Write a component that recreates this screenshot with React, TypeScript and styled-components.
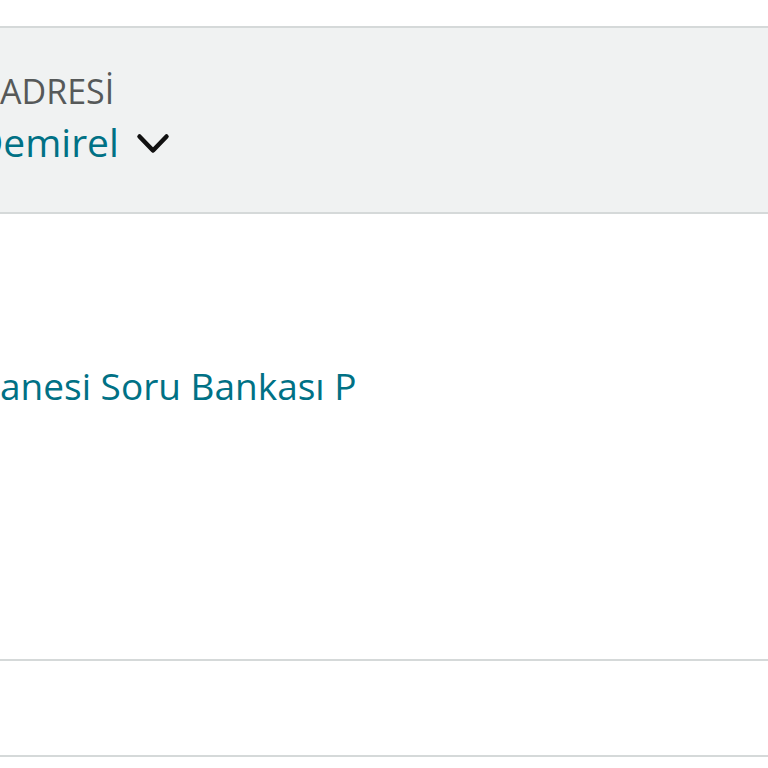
import React from "react";
import styled, { createGlobalStyle } from "styled-components";

const GlobalStyle = createGlobalStyle`
  html, body {
    margin: 0;
    padding: 0;
    background: #ffffff;
    overflow: hidden;
  }
  body {
    font-family: "Open Sans", "Noto Sans", Arial, sans-serif;
  }
`;

const Page = styled.div`
  width: 768px;
  height: 768px;
  overflow: hidden;
  display: flex;
  flex-direction: column;
  padding-top: 26px;
  box-sizing: border-box;
`;

const Header = styled.section`
  height: 188px;
  flex-shrink: 0;
  box-sizing: border-box;
  background: #f0f2f2;
  border-top: 2px solid #d5d9d9;
  border-bottom: 2px solid #d5d9d9;
  display: flex;
  flex-direction: column;
  padding-top: 43px;
`;

const Label = styled.div`
  font-size: 34px;
  line-height: 40px;
  color: #565959;
  white-space: nowrap;
`;

const LinkRow = styled.div`
  display: flex;
  align-items: center;
  gap: 17px;
  margin-top: 6px;
`;

const LinkText = styled.span<{ $shift: number }>`
  font-size: 39px;
  line-height: 50px;
  color: #007185;
  white-space: nowrap;
  margin-left: ${(p) => p.$shift}px;
`;

const Chevron = styled.svg`
  width: 34px;
  height: 22px;
  margin-top: 4px;
`;

const ItemSection = styled.section`
  height: 447px;
  flex-shrink: 0;
  border-bottom: 2px solid #d5d9d9;
  display: flex;
  flex-direction: column;
  padding-top: 148px;
  box-sizing: border-box;
`;

const Title = styled.a`
  font-size: 37px;
  line-height: 48px;
  color: #007185;
  text-decoration: none;
  white-space: nowrap;
`;

const EmptySection = styled.section`
  height: 96px;
  flex-shrink: 0;
  border-bottom: 2px solid #d5d9d9;
  box-sizing: border-box;
`;

export default function App() {
  return (
    <>
      <GlobalStyle />
      <Page>
        <Header>
          <Label>ADRESİ</Label>
          <LinkRow>
            <LinkText $shift={-25}>Demirel</LinkText>
            <Chevron viewBox="0 0 34 22" aria-hidden>
              <path
                d="M3.5 3.5 L17 17.5 L30.5 3.5"
                fill="none"
                stroke="#111111"
                strokeWidth="4.5"
                strokeLinecap="round"
                strokeLinejoin="round"
              />
            </Chevron>
          </LinkRow>
        </Header>
        <ItemSection>
          <Title href="#">anesi Soru Bankası P</Title>
        </ItemSection>
        <EmptySection />
      </Page>
    </>
  );
}
